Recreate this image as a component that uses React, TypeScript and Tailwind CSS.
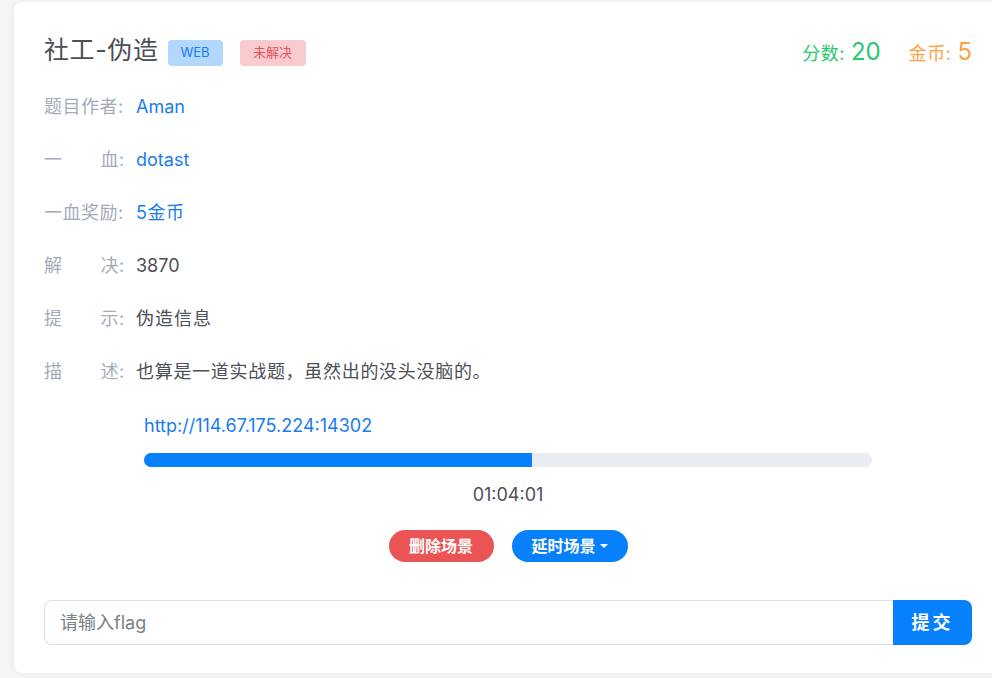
import React from "react";

const font = { fontFamily: 'Inter, "Noto Sans CJK SC", sans-serif' };

function Row({ label, children, justify }: { label: string; children: React.ReactNode; justify?: boolean }) {
  return (
    <div className="flex h-[53px] items-center text-[18px]">
      <div className="flex w-[92px] shrink-0 text-[#a3abba] tracking-[0.5px]">
        {justify ? (
          <span className="flex w-[75px] justify-between">
            {label.split("").map((c, i) => (
              <span key={i}>{c}</span>
            ))}
          </span>
        ) : (
          <span>{label}</span>
        )}
        <span>:</span>
      </div>
      <div>{children}</div>
    </div>
  );
}

export default function App() {
  return (
    <div className="h-[678px] w-[992px] overflow-hidden bg-[#f4f5f7] pl-[14px] pt-[2px]" style={font}>
      <div className="w-[988px] rounded-[8px] bg-white px-[30px] pb-[28px] pt-[31px] shadow-[0_0_6px_rgba(0,0,0,0.06)]">
        <div className="flex h-[36px] items-center justify-between">
          <div className="flex items-center">
            <span className="text-[25px] tracking-[0.6px] text-[#4b4f56]">社工-伪造</span>
            <span className="ml-[9px] mt-[4px] flex h-[26px] w-[55px] items-center justify-center rounded-[4px] bg-[#b3d7ff] text-[13px] text-[#1a7cf0]">WEB</span>
            <span className="ml-[17px] mt-[4px] flex h-[26px] w-[66px] items-center justify-center rounded-[4px] bg-[#f9cbcf] text-[13px] text-[#e5535d]">未解决</span>
          </div>
          <div className="flex items-baseline pt-[2px]">
            <span className="text-[18px] tracking-[0.5px] text-[#28c76f]">分数:</span>
            <span className="ml-[6px] text-[24px] text-[#28c76f]">20</span>
            <span className="ml-[28px] text-[18px] tracking-[0.5px] text-[#ff9f43]">金币:</span>
            <span className="ml-[6px] text-[24px] text-[#ff9f43]">5</span>
          </div>
        </div>
        <div className="mt-[11px]">
          <Row label="题目作者"><span className="text-[#1a7cf0]">Aman</span></Row>
          <Row label="一血" justify><span className="text-[#1a7cf0]">dotast</span></Row>
          <Row label="一血奖励"><span className="tracking-[0.5px] text-[#1a7cf0]">5金币</span></Row>
          <Row label="解决" justify><span className="text-[#4b4f56]">3870</span></Row>
          <Row label="提示" justify><span className="tracking-[1px] text-[#4b4f56]">伪造信息</span></Row>
          <Row label="描述" justify><span className="tracking-[0.7px] text-[#4b4f56]">也算是一道实战题，虽然出的没头没脑的。</span></Row>
        </div>
        <div className="mx-[100px] mt-[14px]">
          <div className="h-[27px] text-[18px] leading-[27px] text-[#1a7cf0]">http://114.67.175.224:14302</div>
          <div className="mt-[14px] h-[14px] w-full overflow-hidden rounded-full bg-[#e9ecf1]">
            <div className="h-full bg-[#0780fb]" style={{ width: "53.3%" }} />
          </div>
          <div className="mt-[14px] h-[27px] text-center text-[18px] leading-[27px] text-[#4b4f56]">01:04:01</div>
          <div className="mt-[22px] flex justify-center gap-[18px]">
            <button className="flex h-[32px] w-[105px] items-center justify-center rounded-full bg-[#ea5455] text-[16px] font-bold text-white">删除场景</button>
            <button className="flex h-[32px] w-[116px] items-center justify-center rounded-full bg-[#0780fb] text-[16px] font-bold text-white">
              延时场景
              <span className="ml-[4px] inline-block h-0 w-0 border-x-[4px] border-t-[4px] border-x-transparent border-t-white" />
            </button>
          </div>
        </div>
        <div className="mt-[38px] flex h-[45px]">
          <input
            className="h-full flex-1 rounded-l-[8px] border border-r-0 border-[#dcdfe4] px-[15px] text-[18px] text-[#4b4f56] outline-none placeholder:text-[#7c8087]"
            placeholder="请输入flag"
            style={font}
          />
          <button className="h-full w-[79px] rounded-r-[8px] bg-[#0780fb] text-[18px] font-bold tracking-[3px] text-white">提交</button>
        </div>
      </div>
    </div>
  );
}
